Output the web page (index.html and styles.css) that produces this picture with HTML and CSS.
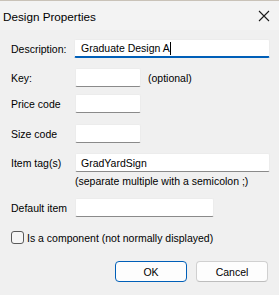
FILE: index.html
```html
<!DOCTYPE html>
<html lang="en">
<head>
  <meta charset="UTF-8">
  <meta name="viewport" content="width=device-width, initial-scale=1.0">
  <title>Design Properties</title>
  <link rel="stylesheet" href="styles.css">
</head>
<body>

  <div class="dialog">
    <div class="titlebar">
      <span class="title">Design Properties</span>
      <span class="close">
        <svg width="12" height="12" viewBox="0 0 12 12">
          <path d="M1 1 L11 11 M11 1 L1 11" stroke="#1a1a1a" stroke-width="1.1" fill="none"/>
        </svg>
      </span>
    </div>

    <div class="content">
      <div class="row row-desc">
        <label class="label">Description:</label>
        <div class="field field-wide focused">Graduate Design A<span class="caret"></span></div>
      </div>

      <div class="row row-key">
        <label class="label">Key:</label>
        <div class="field field-short"></div>
        <span class="note">(optional)</span>
      </div>

      <div class="row row-price">
        <label class="label">Price code</label>
        <div class="field field-short"></div>
      </div>

      <div class="row row-size">
        <label class="label">Size code</label>
        <div class="field field-short"></div>
      </div>

      <div class="row row-tag">
        <label class="label">Item tag(s)</label>
        <div class="field field-wide">GradYardSign</div>
      </div>
      <div class="hint">(separate multiple with a semicolon ;)</div>

      <div class="row row-default">
        <label class="label">Default item</label>
        <div class="field field-mid"></div>
      </div>

      <div class="check-row">
        <span class="checkbox"></span>
        <span>Is a component (not normally displayed)</span>
      </div>

      <div class="buttons">
        <button class="btn btn-default">OK</button>
        <button class="btn">Cancel</button>
      </div>
    </div>
  </div>

</body>
</html>
```

FILE: styles.css
```css
* {
  margin: 0;
  padding: 0;
  box-sizing: border-box;
}

body {
  background: #f0f0f0;
  font-family: 'Liberation Sans', Arial, sans-serif;
  font-size: 10.5px;
  color: #000;
  width: 279px;
  height: 295px;
  overflow: hidden;
  white-space: nowrap;
}

.dialog {
  height: 295px;
  background: #f0f0f0;
  border-top: 1px solid #c9c2b8;
}

.titlebar {
  height: 29px;
  background: #f3f3f3;
  display: flex;
  align-items: center;
  justify-content: space-between;
  padding: 0 9px 0 3px;
}

.title {
  font-size: 11.7px;
  padding-top: 1px;
}

.close {
  display: flex;
  width: 12px;
  height: 12px;
}

.content {
  padding: 9px 9px 0 11px;
}

.row {
  display: flex;
  align-items: center;
  height: 19px;
}

.label {
  width: 64px;
  flex-shrink: 0;
}

.row-key { margin-top: 10px; }
.row-price { margin-top: 7px; }
.row-size { margin-top: 11px; }
.row-tag { margin-top: 10px; }
.row-default { margin-top: 7px; }

.field {
  height: 19px;
  background: #fff;
  border: 1px solid #ececec;
  border-bottom: 1px solid #8a8a8a;
  border-radius: 2px;
  padding: 0 0 0 5px;
  display: flex;
  align-items: center;
}

.field-wide { width: 196px; }
.field-short { width: 66px; }
.field-mid { width: 139px; }

.focused {
  width: 197px;
  margin-left: -1px;
  padding-left: 6px;
  border-bottom: 2px solid #005fb8;
}

.caret {
  display: inline-block;
  width: 1px;
  height: 13px;
  background: #000;
}

.note {
  margin-left: 7px;
}

.hint {
  margin: 3px 0 0 64px;
  height: 16px;
}

.check-row {
  display: flex;
  align-items: center;
  gap: 3px;
  margin-top: 14px;
}

.checkbox {
  width: 13px;
  height: 13px;
  border: 1px solid #5a5a5a;
  border-radius: 3px;
  background: #f6f6f6;
}

.buttons {
  display: flex;
  justify-content: flex-end;
  gap: 9px;
  margin-top: 17px;
  padding-right: 2px;
}

.btn {
  width: 72px;
  height: 21px;
  background: #fdfdfd;
  border: 1px solid #d0d0d0;
  border-bottom-color: #bdbdbd;
  border-radius: 4px;
  font-family: 'Liberation Sans', Arial, sans-serif;
  font-size: 10.5px;
  color: #000;
}

.btn-default {
  border: 1px solid #005fb8;
}
```
